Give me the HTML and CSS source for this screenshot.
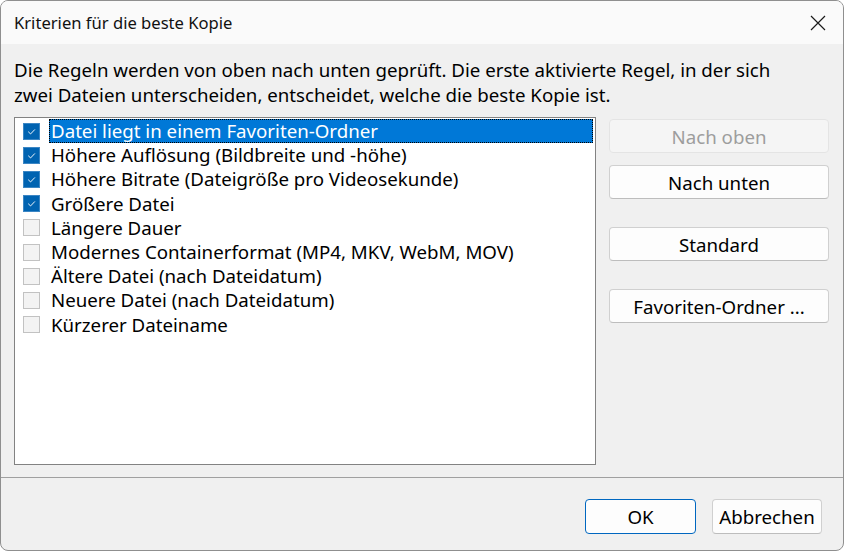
FILE: index.html
```html
<!DOCTYPE html>
<html lang="de">
<head>
<meta charset="utf-8">
<title>Kriterien für die beste Kopie</title>
<link rel="stylesheet" href="styles.css">
</head>
<body>
<div class="window">
  <div class="titlebar">
    <span class="title">Kriterien für die beste Kopie</span>
    <span class="close">
      <svg width="16" height="16" viewBox="0 0 16 16"><path d="M1 1 L15 15 M15 1 L1 15" stroke="#1a1a1a" stroke-width="1.2" fill="none"/></svg>
    </span>
  </div>
  <div class="content">
    <p class="desc">Die Regeln werden von oben nach unten geprüft. Die erste aktivierte Regel, in der sich<br>zwei Dateien unterscheiden, entscheidet, welche die beste Kopie ist.</p>
    <div class="main">
      <div class="list">
        <div class="row"><span class="cb on"><svg viewBox="0 0 16 16"><path d="M4.5 8.2 L7 10.6 L11.6 5.8" stroke="#fff" stroke-width="1" fill="none"/></svg></span><span class="label selected">Datei liegt in einem Favoriten-Ordner</span></div>
        <div class="row"><span class="cb on"><svg viewBox="0 0 16 16"><path d="M4.5 8.2 L7 10.6 L11.6 5.8" stroke="#fff" stroke-width="1" fill="none"/></svg></span><span class="label">Höhere Auflösung (Bildbreite und -höhe)</span></div>
        <div class="row"><span class="cb on"><svg viewBox="0 0 16 16"><path d="M4.5 8.2 L7 10.6 L11.6 5.8" stroke="#fff" stroke-width="1" fill="none"/></svg></span><span class="label">Höhere Bitrate (Dateigröße pro Videosekunde)</span></div>
        <div class="row"><span class="cb on"><svg viewBox="0 0 16 16"><path d="M4.5 8.2 L7 10.6 L11.6 5.8" stroke="#fff" stroke-width="1" fill="none"/></svg></span><span class="label">Größere Datei</span></div>
        <div class="row"><span class="cb"></span><span class="label">Längere Dauer</span></div>
        <div class="row"><span class="cb"></span><span class="label">Modernes Containerformat (MP4, MKV, WebM, MOV)</span></div>
        <div class="row"><span class="cb"></span><span class="label">Ältere Datei (nach Dateidatum)</span></div>
        <div class="row"><span class="cb"></span><span class="label">Neuere Datei (nach Dateidatum)</span></div>
        <div class="row"><span class="cb"></span><span class="label">Kürzerer Dateiname</span></div>
      </div>
      <div class="side">
        <button class="btn disabled">Nach oben</button>
        <button class="btn gap-s">Nach unten</button>
        <button class="btn gap-l">Standard</button>
        <button class="btn gap-l">Favoriten-Ordner ...</button>
      </div>
    </div>
  </div>
  <div class="footer">
    <button class="btn fbtn ok">OK</button>
    <button class="btn fbtn">Abbrechen</button>
  </div>
</div>
</body>
</html>
```
FILE: styles.css
```css
* { box-sizing: border-box; }
html, body { margin: 0; padding: 0; background: #ffffff; }
body {
  font-family: "Noto Sans", "Open Sans", sans-serif;
  color: #000;
}
.window {
  width: 844px;
  height: 551px;
  border: 1px solid #8f8f8f;
  border-radius: 8px;
  overflow: hidden;
  background: #f0f0f0;
  display: flex;
  flex-direction: column;
}
.titlebar {
  height: 43px;
  background: #fafafa;
  display: flex;
  align-items: center;
  justify-content: space-between;
  padding-left: 13px;
  padding-right: 17px;
}
.title {
  font-size: 16.6px;
  color: #111;
}
.close { display: flex; width: 16px; height: 16px; }
.content {
  padding: 13px 14px 0 13px;
}
.desc {
  margin: 0;
  font-size: 18.7px;
  line-height: 25px;
  height: 60px;
  white-space: nowrap;
}
.main {
  display: flex;
  gap: 13px;
}
.list {
  width: 582px;
  height: 348px;
  background: #fff;
  border: 1px solid #828282;
  padding-top: 1px;
}
.row {
  display: flex;
  align-items: center;
  height: 24.2px;
  padding-left: 8px;
}
.cb {
  width: 17px;
  height: 17px;
  border: 1px solid #c2c2c2;
  background: #f3f3f3;
  margin-right: 9px;
  display: flex;
  align-items: center;
  justify-content: center;
}
.cb.on {
  background: #0063b1;
  border-color: #3c86c4;
}
.cb svg { width: 15px; height: 15px; }
.label {
  font-size: 18.7px;
  line-height: 24px;
  padding: 0 2px;
  white-space: nowrap;
}
.label.selected {
  flex: 1;
  margin-right: 2px;
  background: #0078d7;
  color: #fff;
  outline: 1px dotted #000;
  outline-offset: -1px;
}
.side {
  width: 220px;
  display: flex;
  flex-direction: column;
  padding-top: 2px;
}
.btn {
  font-family: "Noto Sans", "Open Sans", sans-serif;
  font-size: 18.7px;
  height: 34px;
  background: #fdfdfd;
  border: 1px solid #d0d0d0;
  border-bottom-color: #bdbdbd;
  border-radius: 4px;
  color: #000;
  padding: 0;
}
.btn.disabled {
  background: #f5f5f5;
  border-color: #e4e4e4;
  color: #9d9d9d;
}
.gap-s { margin-top: 12px; }
.gap-l { margin-top: 28px; }
.footer {
  margin-top: 12px;
  border-top: 1px solid #a0a0a0;
  display: flex;
  justify-content: flex-end;
  gap: 16px;
  padding: 21px 21px 0 0;
}
.fbtn {
  width: 110px;
  height: 35px;
}
.ok {
  width: 111px;
  border-color: #0067c0;
}
```
